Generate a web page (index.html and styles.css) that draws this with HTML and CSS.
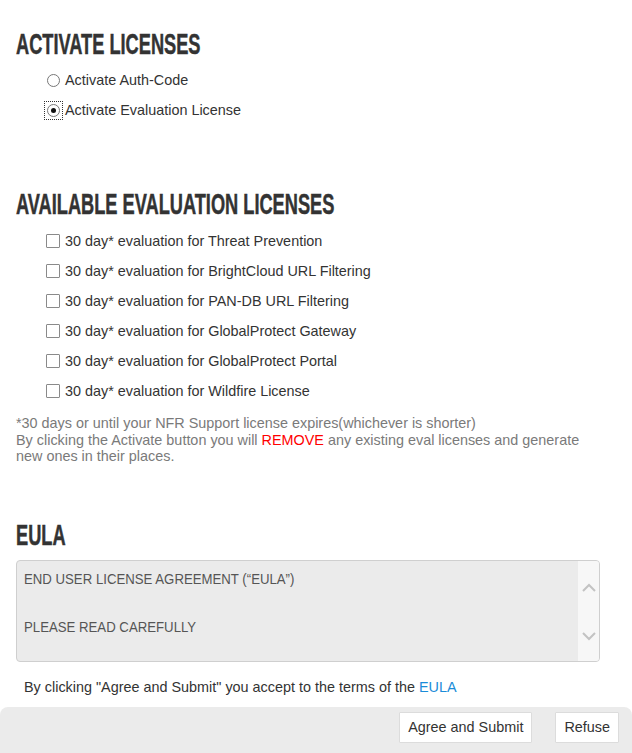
FILE: index.html
```html
<!DOCTYPE html>
<html>
<head>
<meta charset="utf-8">
<link rel="stylesheet" href="styles.css">
</head>
<body>
<div class="page">
  <h2 class="title"><span class="title-text">Activate Licenses</span></h2>
  <div class="options">
    <div class="opt"><span class="radio"></span><span>Activate Auth-Code</span></div>
    <div class="opt"><span class="focus"><span class="radio checked"></span></span><span>Activate Evaluation License</span></div>
  </div>

  <h2 class="title title-2"><span class="title-text">Available Evaluation Licenses</span></h2>
  <div class="checks">
    <div class="opt"><span class="check"></span><span>30 day* evaluation for Threat Prevention</span></div>
    <div class="opt"><span class="check"></span><span>30 day* evaluation for BrightCloud URL Filtering</span></div>
    <div class="opt"><span class="check"></span><span>30 day* evaluation for PAN-DB URL Filtering</span></div>
    <div class="opt"><span class="check"></span><span>30 day* evaluation for GlobalProtect Gateway</span></div>
    <div class="opt"><span class="check"></span><span>30 day* evaluation for GlobalProtect Portal</span></div>
    <div class="opt"><span class="check"></span><span>30 day* evaluation for Wildfire License</span></div>
  </div>
  <p class="note">*30 days or until your NFR Support license expires(whichever is shorter)<br>By clicking the Activate button you will <span class="red">REMOVE</span> any existing eval licenses and generate new ones in their places.</p>

  <h2 class="title title-3"><span class="title-text">EULA</span></h2>
  <div class="eula">
    <div class="eula-text">
      <p><span class="narrow">END USER LICENSE AGREEMENT (“EULA”)</span></p>
      <p><span class="narrow">PLEASE READ CAREFULLY</span></p>
    </div>
    <div class="eula-scroll">
      <svg width="14" height="9" viewBox="0 0 14 9"><path d="M1 8 L7 2 L13 8" fill="none" stroke="#c3c3c3" stroke-width="2"/></svg>
      <svg width="14" height="9" viewBox="0 0 14 9"><path d="M1 1 L7 7 L13 1" fill="none" stroke="#c3c3c3" stroke-width="2"/></svg>
    </div>
  </div>
  <p class="accept">By clicking "Agree and Submit" you accept to the terms of the <a class="link">EULA</a></p>
</div>
<div class="footer">
  <button class="btn">Agree and Submit</button>
  <button class="btn">Refuse</button>
</div>
</body>
</html>
```
FILE: styles.css
```css
html, body {
  margin: 0;
  padding: 0;
  background: #fff;
}
body {
  font-family: "Liberation Sans", Arial, sans-serif;
  font-size: 14.4px;
  color: #333;
}
.page {
  padding: 29px 16px 0 16px;
}
.title {
  margin: 0;
  height: 30px;
  line-height: 30px;
  font-size: 30px;
  font-weight: bold;
  text-transform: uppercase;
  color: #333;
  white-space: nowrap;
}
.title-text {
  display: inline-block;
  transform: scaleX(0.607);
  transform-origin: left center;
  -webkit-text-stroke: 0.5px #333;
}
.options {
  margin-top: 6px;
}
.opt {
  display: flex;
  align-items: center;
  height: 30px;
  padding-left: 30px;
  gap: 5px;
}
.options .opt { padding-left: 31px; }
.radio {
  box-sizing: border-box;
  width: 13px;
  height: 13px;
  border: 1px solid #777;
  border-radius: 50%;
  background: #fff;
  display: inline-flex;
  align-items: center;
  justify-content: center;
}
.radio.checked::after {
  content: "";
  width: 5px;
  height: 5px;
  border-radius: 50%;
  background: #111;
}
.focus {
  display: inline-flex;
  outline: 1px dotted #333;
  outline-offset: 2px;
}
.title-2 { margin-top: 64px; }
.checks { margin-top: 7px; }
.check {
  box-sizing: border-box;
  width: 14px;
  height: 14px;
  border: 1px solid #8a8a8a;
  border-radius: 1px;
  background: #fff;
  flex: none;
}
.checks .opt { padding-left: 30px; }
.note {
  margin: 9px 0 0 0;
  line-height: 16.5px;
  color: #7a7a7a;
  padding-right: 22px;
}
.red { color: #f00; }
.title-3 { margin-top: 55px; }
.eula {
  margin-top: 10px;
  margin-right: 16px;
  height: 100px;
  border: 1px solid #cfcfcf;
  border-radius: 4px;
  background: #ebebeb;
  display: flex;
  overflow: hidden;
}
.eula-text {
  flex: 1;
  padding: 9px 7px;
  font-size: 15px;
  color: #555;
  white-space: nowrap;
}
.eula-text p {
  margin: 0 0 30px 0;
  line-height: 18px;
}
.narrow {
  display: inline-block;
  transform: scaleX(0.88);
  transform-origin: left center;
}
.eula-scroll {
  width: 21px;
  background: #f7f7f7;
  display: flex;
  flex-direction: column;
  align-items: center;
  justify-content: space-between;
  padding: 22px 0 20px 0;
}
.accept {
  margin: 10px 0 0 8px;
  line-height: 30px;
  color: #333;
}
.link { color: #1a8cd8; }
.footer {
  margin-top: 5px;
  height: 50px;
  background: #ebebeb;
  border-top-left-radius: 8px;
  border-top-right-radius: 8px;
  display: flex;
  justify-content: flex-end;
  align-items: flex-start;
  gap: 23px;
  padding: 5px 13px 0 0;
}
.btn {
  height: 31px;
  border: 1px solid #dcdcdc;
  background: #fff;
  font-family: "Liberation Sans", Arial, sans-serif;
  font-size: 14.4px;
  color: #333;
  padding: 0 8px;
  border-radius: 1px;
}
```
